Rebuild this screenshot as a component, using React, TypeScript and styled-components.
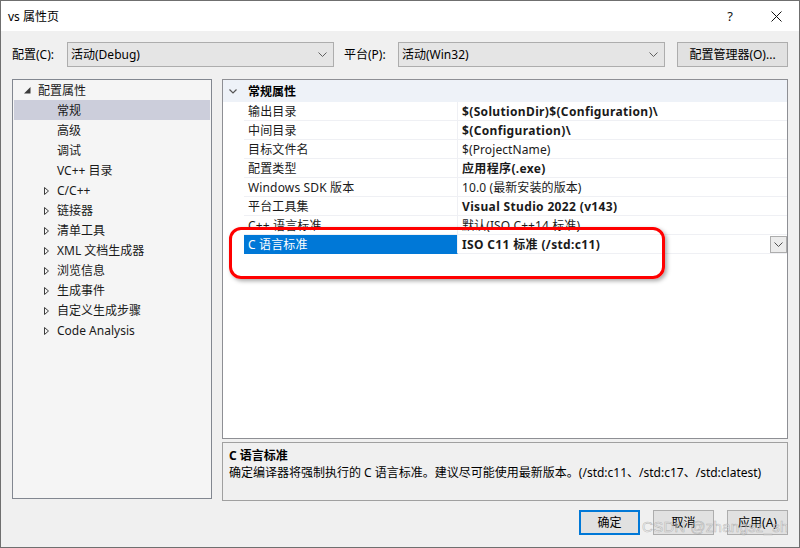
import React from "react";
import styled, { createGlobalStyle, css } from "styled-components";

const GlobalStyle = createGlobalStyle`
  html, body { margin: 0; padding: 0; background: #ffffff; }
  body {
    font-family: "Noto Sans", "Noto Sans CJK SC", sans-serif;
    font-size: 12px;
    color: #000;
  }
  * { box-sizing: border-box; }
`;

const Window = styled.div`
  position: relative;
  width: 800px;
  height: 548px;
  border: 1px solid #6f6f6f;
  display: flex;
  flex-direction: column;
  background: #f0f0f0;
  overflow: hidden;
`;

const TitleBar = styled.div`
  height: 30px;
  flex: none;
  background: #ffffff;
  display: flex;
  align-items: center;
  padding-left: 7px;
`;

const TitleText = styled.div`
  flex: 1;
  font-size: 12px;
  line-height: 16px;
  padding-top: 1px;
`;

const TitleButton = styled.div<{ $w: number }>`
  width: ${(p) => p.$w}px;
  height: 30px;
  display: flex;
  align-items: center;
  justify-content: center;
  font-size: 13px;
  color: #111;
`;

const Body = styled.div`
  flex: 1;
  display: flex;
  flex-direction: column;
  padding: 0 11px;
`;

const Toolbar = styled.div`
  margin-top: 11px;
  height: 25px;
  display: flex;
  align-items: center;
`;

const Label = styled.div<{ $w: number }>`
  width: ${(p) => p.$w}px;
  flex: none;
  line-height: 16px;
  white-space: nowrap;
`;

const Combo = styled.div`
  width: 267px;
  height: 25px;
  flex: none;
  background: #e5e5e5;
  border: 1px solid #adadad;
  display: flex;
  align-items: center;
  padding: 0 6px 0 3px;
  line-height: 16px;
  span { flex: 1; }
`;

const ToolButton = styled.div`
  margin-left: 12px;
  width: 111px;
  height: 25px;
  flex: none;
  background: #e1e1e1;
  border: 1px solid #adadad;
  display: flex;
  align-items: center;
  justify-content: center;
  line-height: 16px;
  white-space: nowrap;
`;

const Main = styled.div`
  margin-top: 12px;
  height: 422px;
  display: flex;
  gap: 10px;
`;

const Tree = styled.div`
  width: 200px;
  height: 420px;
  flex: none;
  border: 1px solid #828790;
  background: #f5f5f5;
  padding: 0 1px;
`;

const TreeRow = styled.div<{ $level: number; $selected?: boolean }>`
  height: 20px;
  display: flex;
  align-items: center;
  padding-left: ${(p) => (p.$level === 0 ? 9 : 28)}px;
  padding-top: 1px;
  color: #1a1a1a;
  line-height: 16px;
  ${(p) =>
    p.$selected &&
    css`
      background: #cccedb;
    `}
`;

const ArrowSlot = styled.div`
  width: 15px;
  height: 20px;
  flex: none;
  margin-top: -1px;
  svg { display: block; }
`;

const RightCol = styled.div`
  flex: 1;
  display: flex;
  flex-direction: column;
  gap: 3px;
`;

const Grid = styled.div`
  position: relative;
  height: 360px;
  flex: none;
  border: 1px solid #8e8f94;
  background: #ffffff;
`;

const CategoryRow = styled.div`
  height: 22px;
  background: #eef2f8;
  display: flex;
  align-items: center;
  font-weight: bold;
  line-height: 16px;
  padding-top: 1px;
`;

const CategoryChevron = styled.div`
  width: 25px;
  height: 21px;
  flex: none;
  margin-top: -1px;
  svg { display: block; }
`;

const PropRow = styled.div`
  height: 19px;
  display: grid;
  grid-template-columns: 21px 214px 1fr;
`;

const Gutter = styled.div``;

const NameCell = styled.div<{ $selected?: boolean }>`
  border-bottom: 1px solid #eff0f4;
  border-right: 1px solid #eff0f4;
  padding: 1px 0 0 4px;
  display: flex;
  align-items: center;
  line-height: 16px;
  white-space: nowrap;
  overflow: hidden;
  color: #1a1a1a;
  letter-spacing: 0.15px;
  ${(p) =>
    p.$selected &&
    css`
      background: #0078d7;
      color: #ffffff;
      border-bottom-color: #0078d7;
    `}
`;

const ValueCell = styled.div<{ $bold?: boolean }>`
  border-bottom: 1px solid #eff0f4;
  padding: 1px 0 0 4px;
  display: flex;
  align-items: center;
  line-height: 16px;
  white-space: nowrap;
  font-weight: ${(p) => (p.$bold ? "bold" : "normal")};
  letter-spacing: ${(p) => (p.$bold ? "0.35px" : "0.1px")};
  color: #1a1a1a;
  span { flex: 1; }
`;

const DropButton = styled.div`
  width: 17px;
  height: 17px;
  flex: none;
  margin-top: -1px;
  border: 1px solid #adadad;
  background: #ececec;
  display: flex;
  align-items: center;
  justify-content: center;
  svg { display: block; }
`;

const Annotation = styled.div`
  position: absolute;
  left: 6px;
  top: 147px;
  width: 436px;
  height: 52px;
  border: 3px solid #ff0000;
  border-radius: 12px;
  box-shadow: 2px 2px 4px rgba(0, 0, 0, 0.35);
  pointer-events: none;
`;

const Desc = styled.div`
  height: 59px;
  flex: none;
  border: 1px solid #a0a0a0;
  background: #f0f0f0;
  padding: 4px 6px 0;
  line-height: 17px;
`;

const DescTitle = styled.div`
  font-weight: bold;
`;

const Footer = styled.div`
  margin-top: 9px;
  height: 25px;
  display: flex;
  justify-content: flex-end;
  gap: 13px;
`;

const DlgButton = styled.div<{ $default?: boolean }>`
  width: 61px;
  height: 25px;
  background: #e1e1e1;
  border: ${(p) => (p.$default ? "2px solid #0078d7" : "1px solid #adadad")};
  display: flex;
  align-items: center;
  justify-content: center;
  line-height: 16px;
`;

const Watermark = styled.div`
  position: absolute;
  left: 641px;
  top: 517px;
  font-family: "Liberation Sans", "Noto Sans CJK SC", sans-serif;
  font-size: 15px;
  color: rgba(255, 255, 255, 0.5);
  -webkit-text-stroke: 0.6px rgba(130, 130, 130, 0.5);
  letter-spacing: 0.3px;
  pointer-events: none;
`;

const Chevron = ({ w = 9, h = 5, color = "#606060" }: { w?: number; h?: number; color?: string }) => (
  <svg width={w} height={h} viewBox={`0 0 ${w} ${h}`}>
    <polyline points={`0.5,0.5 ${w / 2},${h - 0.5} ${w - 0.5},0.5`} fill="none" stroke={color} strokeWidth="1" />
  </svg>
);

type TreeItem = { label: string; level: number; arrow?: "open" | "closed"; selected?: boolean };

const treeItems: TreeItem[] = [
  { label: "配置属性", level: 0, arrow: "open" },
  { label: "常规", level: 1, selected: true },
  { label: "高级", level: 1 },
  { label: "调试", level: 1 },
  { label: "VC++ 目录", level: 1 },
  { label: "C/C++", level: 1, arrow: "closed" },
  { label: "链接器", level: 1, arrow: "closed" },
  { label: "清单工具", level: 1, arrow: "closed" },
  { label: "XML 文档生成器", level: 1, arrow: "closed" },
  { label: "浏览信息", level: 1, arrow: "closed" },
  { label: "生成事件", level: 1, arrow: "closed" },
  { label: "自定义生成步骤", level: 1, arrow: "closed" },
  { label: "Code Analysis", level: 1, arrow: "closed" },
];

type Prop = { name: string; value: string; bold?: boolean; selected?: boolean };

const props: Prop[] = [
  { name: "输出目录", value: "$(SolutionDir)$(Configuration)\\", bold: true },
  { name: "中间目录", value: "$(Configuration)\\", bold: true },
  { name: "目标文件名", value: "$(ProjectName)" },
  { name: "配置类型", value: "应用程序(.exe)", bold: true },
  { name: "Windows SDK 版本", value: "10.0 (最新安装的版本)" },
  { name: "平台工具集", value: "Visual Studio 2022 (v143)", bold: true },
  { name: "C++ 语言标准", value: "默认(ISO C++14 标准)" },
  { name: "C 语言标准", value: "ISO C11 标准 (/std:c11)", bold: true, selected: true },
];

const TreeArrow = ({ kind }: { kind?: "open" | "closed" }) => (
  <ArrowSlot>
    {kind === "open" && (
      <svg width="15" height="20" viewBox="0 0 15 20">
        <polygon points="7.5,7 7.5,13.5 1,13.5" fill="#3c3c3c" />
      </svg>
    )}
    {kind === "closed" && (
      <svg width="15" height="20" viewBox="0 0 15 20">
        <polygon points="2.5,7.5 6.5,11 2.5,14.5" fill="none" stroke="#3c3c3c" strokeWidth="1" />
      </svg>
    )}
  </ArrowSlot>
);

export default function App() {
  return (
    <>
      <GlobalStyle />
      <Window>
        <TitleBar>
          <TitleText>vs 属性页</TitleText>
          <TitleButton $w={46}>?</TitleButton>
          <TitleButton $w={46}>
            <svg width="11" height="11" viewBox="0 0 11 11">
              <path d="M0.5 0.5 L10.5 10.5 M10.5 0.5 L0.5 10.5" stroke="#111" strokeWidth="1" />
            </svg>
          </TitleButton>
        </TitleBar>
        <Body>
          <Toolbar>
            <Label $w={55}>配置(C):</Label>
            <Combo>
              <span>活动(Debug)</span>
              <Chevron />
            </Combo>
            <Label $w={54} style={{ marginLeft: 10 }}>平台(P):</Label>
            <Combo>
              <span>活动(Win32)</span>
              <Chevron />
            </Combo>
            <ToolButton>配置管理器(O)...</ToolButton>
          </Toolbar>
          <Main>
            <Tree>
              {treeItems.map((t) => (
                <TreeRow key={t.label} $level={t.level} $selected={t.selected}>
                  <TreeArrow kind={t.arrow} />
                  {t.label}
                </TreeRow>
              ))}
            </Tree>
            <RightCol>
              <Grid>
                <CategoryRow>
                  <CategoryChevron>
                    <svg width="25" height="21" viewBox="0 0 25 21">
                      <polyline points="6.5,8.5 10,12 13.5,8.5" fill="none" stroke="#555" strokeWidth="1.2" />
                    </svg>
                  </CategoryChevron>
                  常规属性
                </CategoryRow>
                {props.map((p) => (
                  <PropRow key={p.name}>
                    <Gutter />
                    <NameCell $selected={p.selected}>{p.name}</NameCell>
                    <ValueCell $bold={p.bold}>
                      <span>{p.value}</span>
                      {p.selected && (
                        <DropButton>
                          <Chevron w={9} h={5} color="#505050" />
                        </DropButton>
                      )}
                    </ValueCell>
                  </PropRow>
                ))}
                <Annotation />
              </Grid>
              <Desc>
                <DescTitle>C 语言标准</DescTitle>
                <div>确定编译器将强制执行的 C 语言标准。建议尽可能使用最新版本。(/std:c11、/std:c17、/std:clatest)</div>
              </Desc>
            </RightCol>
          </Main>
          <Footer>
            <DlgButton $default>确定</DlgButton>
            <DlgButton>取消</DlgButton>
            <DlgButton>应用(A)</DlgButton>
          </Footer>
        </Body>
        <Watermark>CSDN @zhangsz_sh</Watermark>
      </Window>
    </>
  );
}
